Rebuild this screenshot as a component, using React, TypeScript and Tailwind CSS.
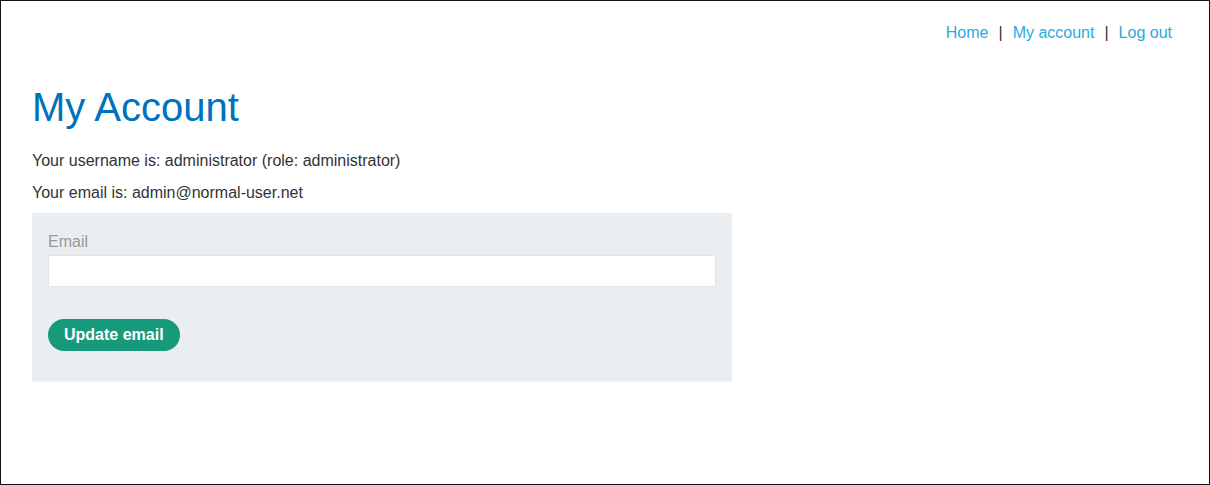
import React from 'react'

const font = { fontFamily: '"Liberation Sans", Arial, sans-serif' }

export default function App() {
  return (
    <div style={font} className="w-[1210px] h-[485px] border border-[#111] bg-white text-[#333332] flex flex-col">
      {/* top nav */}
      <div className="flex justify-end items-center gap-[10px] pt-[20px] pr-[37px] text-[16px] leading-[24px]">
        <a className="text-[#29a9df]">Home</a>
        <span className="text-[#333]">|</span>
        <a className="text-[#29a9df]">My account</a>
        <span className="text-[#333]">|</span>
        <a className="text-[#29a9df]">Log out</a>
      </div>

      <div className="pl-[31px] pt-[38px]">
        <h1 className="text-[40px] leading-[48px] text-[#0071bc] mb-[18px]">My Account</h1>
        <p className="text-[16px] leading-[24px] mb-[8px]">Your username is: administrator (role: administrator)</p>
        <p className="text-[16px] leading-[24px] mb-[8px]">Your email is: admin@normal-user.net</p>

        <form className="w-[700px] bg-[#ebeef0] border-b border-[#f3f4f5] px-[16px] pt-[17px] pb-[30px] flex flex-col">
          <label className="text-[16px] leading-[24px] text-[#999]">Email</label>
          <input className="mt-[1px] h-[32px] bg-white border border-[#e1e3e5] outline-none" />
          <div className="mt-[32px]">
            <button type="button" className="h-[32px] px-[16px] rounded-full bg-[#169a7b] text-white font-bold text-[16px]">
              Update email
            </button>
          </div>
        </form>
      </div>
    </div>
  )
}
